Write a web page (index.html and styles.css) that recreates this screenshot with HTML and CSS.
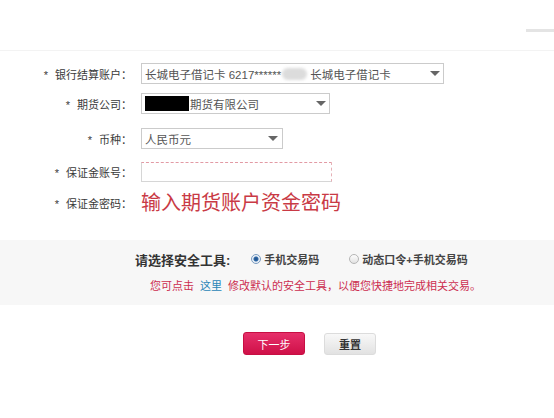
FILE: index.html
```html
<!DOCTYPE html>
<html lang="zh-CN">
<head>
    <meta charset="UTF-8">
    <meta name="viewport" content="width=device-width, initial-scale=1.0">
    <title>保证金账户</title>
    <link rel="stylesheet" href="styles.css">
</head>
<body>
    <div class="topbar"><span class="topbar-tab"></span></div>

    <form class="form">
        <div class="row r1">
            <label class="label"><i>*</i>银行结算账户：</label>
            <div class="select w-bank">
                <span>长城电子借记卡 6217******</span><span class="blur"></span><span>长城电子借记卡</span>
                <b class="arrow"></b>
            </div>
        </div>
        <div class="row r2">
            <label class="label"><i>*</i>期货公司：</label>
            <div class="select w-company">
                <span class="mask"></span><span>期货有限公司</span>
                <b class="arrow"></b>
            </div>
        </div>
        <div class="row r3">
            <label class="label"><i>*</i>币种：</label>
            <div class="select w-currency">
                <span>人民币元</span>
                <b class="arrow"></b>
            </div>
        </div>
        <div class="row r4">
            <label class="label"><i>*</i>保证金账号：</label>
            <div class="input"></div>
        </div>
        <div class="row r5">
            <label class="label"><i>*</i>保证金密码：</label>
            <span class="hint">输入期货账户资金密码</span>
        </div>

        <div class="secure">
            <div class="secure-line">
                <span class="secure-title">请选择安全工具:</span>
                <span class="opt"><span class="radio checked"></span>手机交易码</span>
                <span class="opt opt2"><span class="radio"></span>动态口令+手机交易码</span>
            </div>
            <div class="secure-tip">您可点击<a class="tip-link">这里</a>修改默认的安全工具，以便您快捷地完成相关交易。</div>
        </div>

        <div class="actions">
            <button type="button" class="btn btn-next">下一步</button>
            <button type="button" class="btn btn-reset">重置</button>
        </div>
    </form>
</body>
</html>
```

FILE: styles.css
```css
body {
    margin: 0;
    background: #fff;
    font-family: "Liberation Sans", "Noto Sans CJK SC", sans-serif;
    color: #333;
}
.topbar {
    height: 50px;
    border-bottom: 1px solid #f3f3f3;
    display: flex;
    justify-content: flex-end;
    align-items: flex-start;
}
.topbar-tab {
    width: 28px;
    height: 3px;
    margin-top: 29px;
    background: #e4e4e4;
}
.form {
    padding-top: 12px;
}
.row {
    display: flex;
    align-items: center;
    height: 21px;
}
.r1 { margin-bottom: 9px; }
.r2 { margin-bottom: 14px; }
.r3 { margin-bottom: 13px; }
.r4 { margin-bottom: 9px; height: 20px; }
.r5 { height: 24px; }
.label {
    width: 132px;
    flex-shrink: 0;
    margin-right: 9px;
    text-align: right;
    font-size: 11px;
    color: #3a3a3a;
}
.label i {
    font-style: normal;
    margin-right: 7px;
}
.select {
    box-sizing: border-box;
    height: 21px;
    border: 1px solid #cbcbcb;
    background: #fff;
    display: flex;
    align-items: center;
    padding: 0 3px;
    font-size: 11.5px;
    color: #555;
}
.w-bank { width: 303px; }
.w-company { width: 189px; }
.w-currency { width: 142px; padding-right: 4px; }
.arrow {
    margin-left: auto;
    width: 0;
    height: 0;
    border-left: 5px solid transparent;
    border-right: 5px solid transparent;
    border-top: 5px solid #666;
}
.blur {
    width: 25px;
    height: 12px;
    margin: 0 3px 0 1px;
    border-radius: 6px;
    background: #dcdcdc;
    filter: blur(1.5px);
}
.mask {
    width: 44px;
    height: 15px;
    background: #000;
    margin-right: 1px;
}
.input {
    box-sizing: border-box;
    width: 191px;
    height: 20px;
    border: 1px solid #d6d6d6;
    border-top: 1px dashed #e29aa4;
    border-right: 1px dashed #e6b0b6;
    background: #fff;
}
.hint {
    font-size: 20px;
    line-height: 24px;
    color: #c93a45;
}
.secure {
    margin-top: 25px;
    padding: 10px 0 11px;
    background: #f7f7f7;
}
.secure-line {
    display: flex;
    align-items: center;
    height: 18px;
    padding-left: 135px;
}
.secure-title {
    font-size: 13px;
    font-weight: bold;
    color: #333;
}
.opt {
    display: flex;
    align-items: center;
    margin-left: 21px;
    font-size: 11px;
    font-weight: bold;
    color: #444;
}
.opt2 {
    margin-left: 30px;
}
.radio {
    box-sizing: border-box;
    width: 10px;
    height: 10px;
    margin-right: 3px;
    border-radius: 50%;
    border: 1px solid #b5b5b5;
    background: linear-gradient(#fdfdfd, #e2e2e2);
}
.radio.checked {
    border-color: #7a9cc0;
    background: radial-gradient(circle, #1f4f86 0, #2d67a6 2px, #e8eef5 3px, #f4f4f4 5px);
}
.secure-tip {
    margin-top: 10px;
    padding-left: 150px;
    font-size: 11px;
    line-height: 16px;
    color: #cc2d4f;
}
.tip-link {
    margin: 0 6px;
    color: #2a86b8;
}
.actions {
    display: flex;
    align-items: center;
    margin-top: 27px;
    padding-left: 243px;
}
.btn {
    box-sizing: border-box;
    font-family: "Liberation Sans", "Noto Sans CJK SC", sans-serif;
    font-size: 11px;
    border-radius: 3px;
    cursor: pointer;
    padding: 0;
}
.btn-next {
    width: 62px;
    height: 23px;
    border: 1px solid #c70f43;
    background: linear-gradient(#e6306a, #cf1048);
    color: #fff;
}
.btn-reset {
    width: 52px;
    height: 22px;
    margin-left: 19px;
    border: 1px solid #dcdcdc;
    background: linear-gradient(#f8f8f8, #e2e2e2);
    color: #333;
    font-weight: bold;
}
```
